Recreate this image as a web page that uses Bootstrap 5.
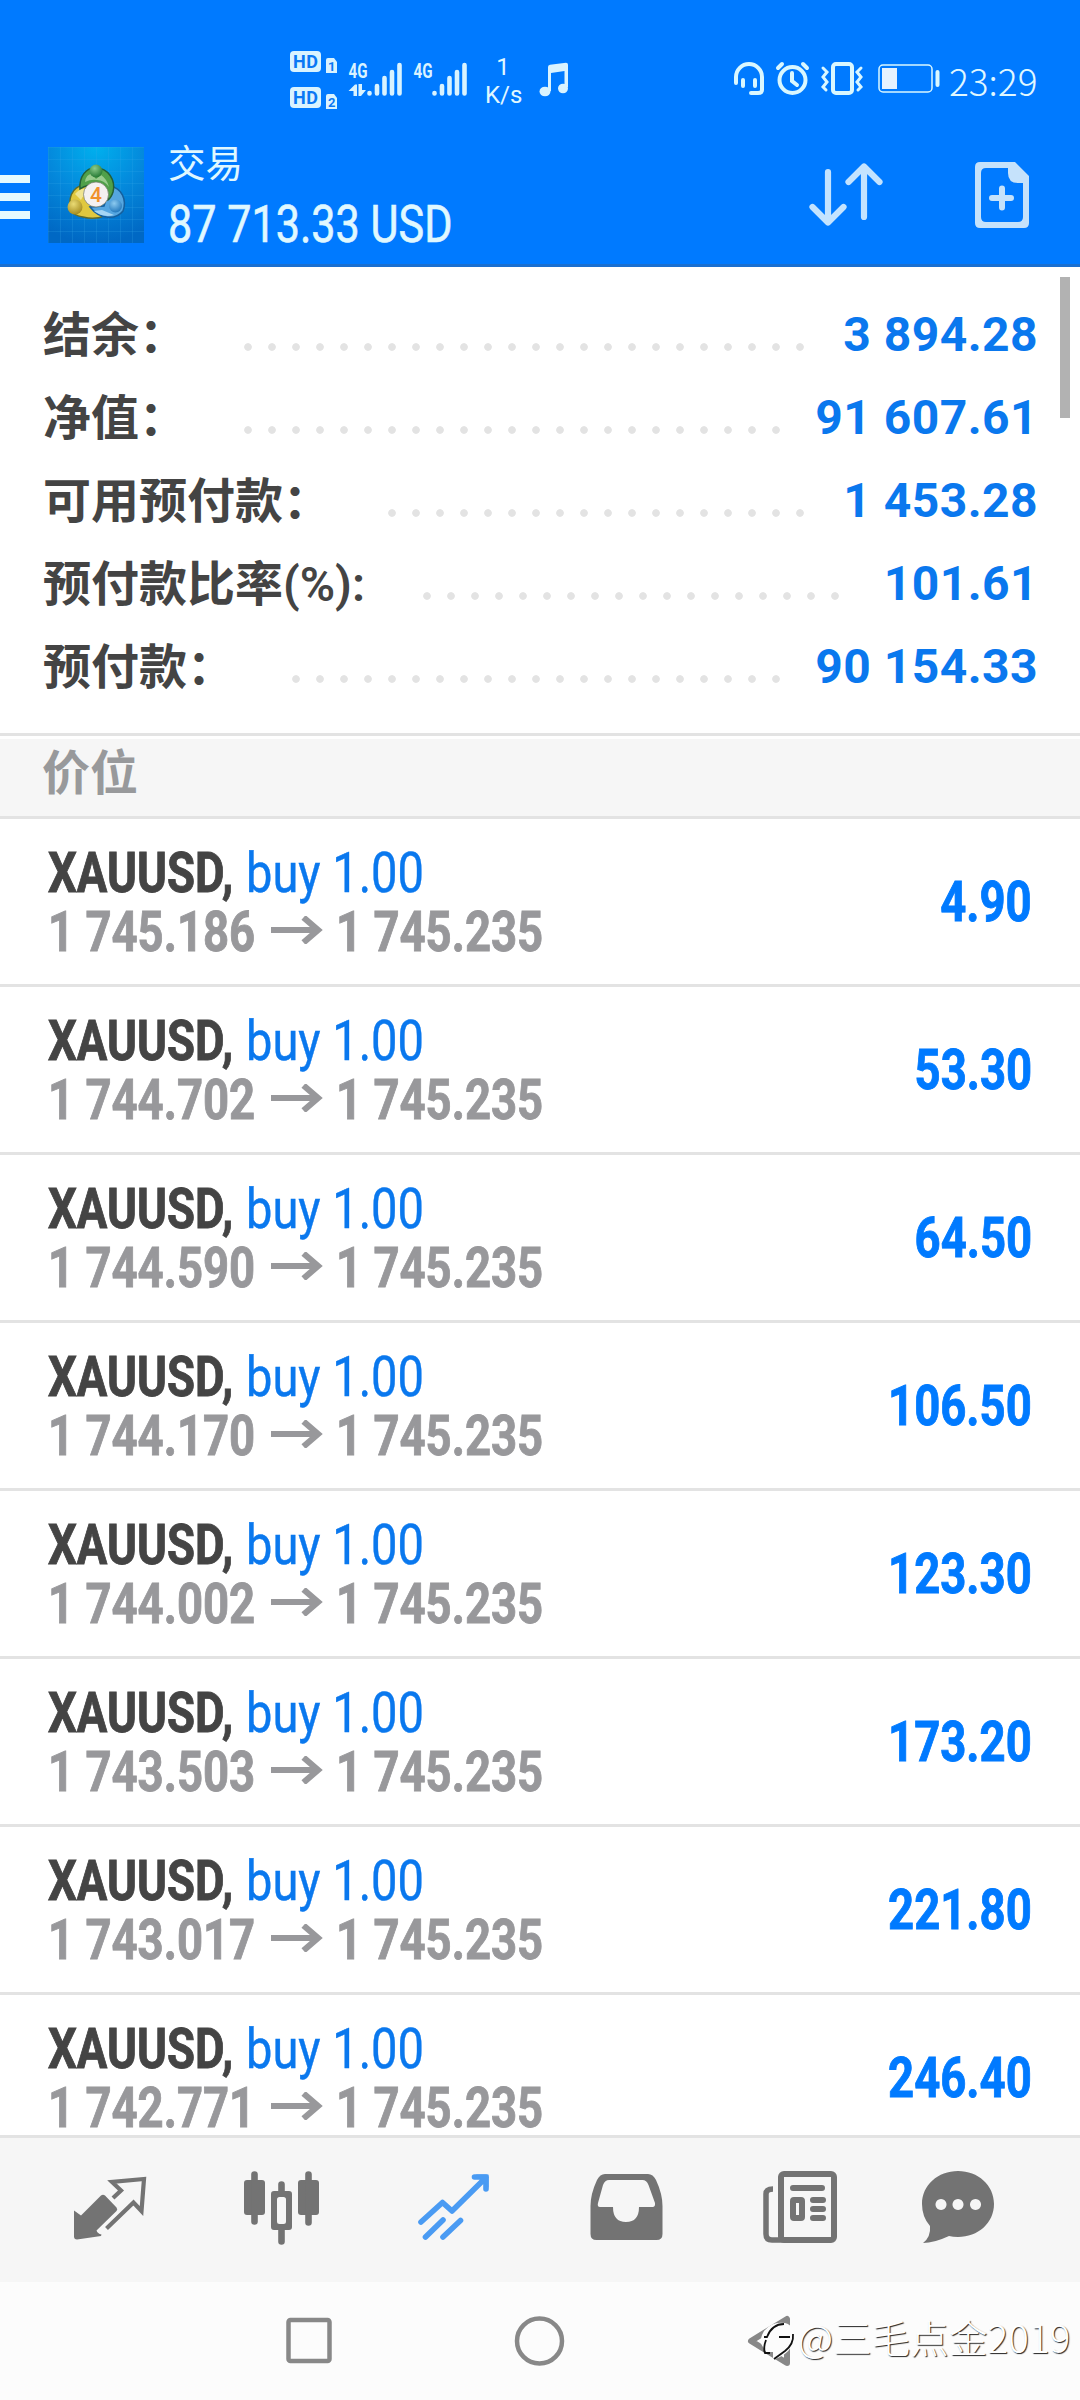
<!DOCTYPE html>
<html lang="zh-CN">
<head>
<meta charset="utf-8">
<meta name="viewport" content="width=device-width, initial-scale=1">
<title>交易</title>
<link href="https://cdn.jsdelivr.net/npm/bootstrap@5.3.0/dist/css/bootstrap.min.css" rel="stylesheet">
<style>
  body{width:1080px;height:2400px;overflow:hidden;background:#fff;font-family:Roboto,"Noto Sans CJK SC",sans-serif;line-height:1;color:#444}
  svg{display:block;flex:none}
  .app{height:2400px}
  .top-area{height:267px;background:#007aff;border-bottom:3px solid #1a6fd0}
  .status{height:130px;padding:46px 43px 0 289px}
  .titlebar{height:134px}
  .ice{color:#e0f8ff}
  .rate{font-size:24px;line-height:28px;width:36px;margin-left:14px;margin-top:7px}
  .clock{font-family:"Noto Sans CJK SC",sans-serif;font-weight:300;font-size:37px;line-height:40px;width:88px;margin-left:9px}
  .account{margin-left:24px;width:637px;padding-top:12px}
  .heading{font-size:37.5px;line-height:44px}
  .sum{font-size:51.5px;line-height:52px;margin-top:13px;-webkit-text-stroke:.5px}
  .squeeze{display:inline-block;white-space:pre;transform-origin:0 50%}
  .sq-r{transform:scaleX(.855);-webkit-text-stroke:.4px}
  .sum .sq-r{transform:scaleX(.838);-webkit-text-stroke:.6px}
  .sq-b{transform:scaleX(.827);-webkit-text-stroke:.9px}
  .summary{height:466px;padding:26px 0 0 43px;position:relative}
  .sum-row{height:83px;font-size:48px;font-weight:700;padding-right:42px}
  .lbl{color:#444;white-space:nowrap;position:relative;top:1px}
  .dotline{height:8px;margin-top:24px;background:radial-gradient(circle at 12px 4px,#e3e3e3 3.4px,transparent 4.2px) 0 0/24px 8px repeat-x}
  .amount{color:#0a78ee;letter-spacing:.45px;margin-left:auto}
  .thumb{position:absolute;left:1060px;top:10px;width:10px;height:141px;background:#b2b2b2}
  .section{height:86px;border-top:3px solid #e3e3e3;border-bottom:3px solid #e3e3e3;padding-top:3px}
  .section>div{height:77px;background:#f6f6f6;padding:10px 0 0 42px;font-size:48px;line-height:50px;font-weight:700;color:#98999b}
  .trades{height:1316px;overflow:hidden;background:#fff}
  .trade{height:168px;border-bottom:3px solid #e3e3e3;padding:29px 0 0 48px}
  .ln{height:59px;font-size:55px;line-height:50px;white-space:nowrap}
  .sym{width:198px;font-weight:700;color:#444}
  .side{color:#0a78ee}
  .price{color:#98989b;font-weight:700}
  .price svg{margin-top:9px}
  .p1{width:223px}.p2{margin-left:13px}
  .profit{font-size:55px;font-weight:700;color:#007aff;margin-right:48px;line-height:60px;padding-top:24px}
  .profit .squeeze{transform-origin:100% 50%}
  .tabs{height:147px;background:#f6f6f6;border-top:3px solid #e3e3e3}
  .sysnav{height:118px;background:#fcfcfc;position:relative}
  .wm{position:absolute;left:798px;top:33px;font-family:"Noto Sans CJK SC",sans-serif;font-weight:300;font-size:38.5px;line-height:42px;letter-spacing:.1px;color:#fff;text-shadow:1px 1px 1px #222;white-space:nowrap}
</style>
<script src="https://cdn.jsdelivr.net/npm/bootstrap@5.3.0/dist/js/bootstrap.bundle.min.js"></script>
</head>
<body>
<div class="app d-flex flex-column">
  <header class="top-area">
    <div class="status d-flex align-items-start ice">
      <svg width="182" height="66" viewBox="289 46 182 66" fill="#d9f3ff" font-family="Roboto" font-weight="700">
        <rect x="290" y="51" width="31" height="21" rx="4"/><rect x="290" y="87" width="31" height="21" rx="4"/>
        <path d="M326 60q0-2 2-2h6l3 4v11h-11zM326 96q0-2 2-2h6l3 4v11h-11z"/>
        <g fill="#0a78f4"><text x="293" y="68" font-size="18" textLength="25">HD</text><text x="293" y="104" font-size="18" textLength="25">HD</text><text x="328" y="71" font-size="13">1</text><text x="328" y="107" font-size="13">2</text></g>
        <text x="348.500" y="78" font-size="21" textLength="19" lengthAdjust="spacingAndGlyphs">4G</text>
        <text x="413.500" y="78" font-size="21" textLength="19" lengthAdjust="spacingAndGlyphs">4G</text>
        <path d="M348.500 91l6.500-6.500h2v11.500h-3.500v-5zM358.500 84h3.500v6h4l-5 6h-2.500z"/>
        <g stroke="#d9f3ff" stroke-width="4.600" stroke-linecap="round"><path d="M369.500 93v.5M377 86v7.500M384.500 78v15.500M392 72v21.500M399.500 65v28.500M434.500 93v.5M442 86v7.500M449.500 78v15.500M457 72v21.500M464.500 65v28.500"/></g>
      </svg>
      <div class="rate text-center">1<br>K/s</div>
      <svg style="margin:16px 0 0 18px" width="30" height="36" viewBox="540 62 30 36" fill="#d9f3ff"><path d="M549 67q0-2 2-2.300l16-2q2 0 2 2V87h-3.500V71L552 73v18h-3z"/><ellipse cx="546" cy="91.500" rx="5.500" ry="4.800"/><ellipse cx="564" cy="88.500" rx="5" ry="4.800"/></svg>
      <svg style="margin:13px 0 0 auto" width="208" height="40" viewBox="732 60 208 40" fill="none" stroke="#d9f7ff" stroke-width="4" stroke-linecap="round">
        <path d="M736 84v-6a13 13 0 0 1 26 0v13q0 3-4 3h-7M743 81v6M755 81v6" stroke-width="4"/>
        <circle cx="792.500" cy="81" r="13"/><path d="M792 74v8l5 4M778 69l4-4M807 69l-4-4"/>
        <rect x="833" y="65" width="19" height="29" rx="3"/><path d="M823 69l4 4-4 5 4 5-4 5 3 3M861 69l-4 4 4 5-4 5 4 5-3 3" stroke-width="3"/>
        <rect x="879" y="66" width="53" height="27" rx="4" stroke-width="1.500"/><rect x="882" y="69" width="15" height="21" fill="#e6f2ff" stroke="none"/><path d="M937.500 73v13" stroke-width="4"/>
      </svg>
      <div class="clock" style="margin-top:14px">23:29</div>
    </div>
    <div class="titlebar d-flex align-items-start ice">
      <svg style="margin-top:44px" width="30" height="46" fill="#e6faff"><path d="M0 1h30v8H0zM0 19h30v8H0zM0 37h30v8H0z"/></svg>
      <svg style="margin:17px 0 0 18px" width="96" height="96" viewBox="0 0 96 96">
        <defs>
          <radialGradient id="bg" cx=".5" cy="0" r="1"><stop offset="0" stop-color="#00b0ee"/><stop offset=".5" stop-color="#0489dc"/><stop offset="1" stop-color="#0068c4"/></radialGradient>
          <pattern id="grid" width="12" height="12" patternUnits="userSpaceOnUse"><path d="M0 .5h12M.5 0v12" stroke="#35a8e6" stroke-opacity=".22"/></pattern>
          <radialGradient id="gr" cx=".4" cy=".3" r=".7"><stop offset="0" stop-color="#8ccb8a"/><stop offset="1" stop-color="#267a35"/></radialGradient>
          <radialGradient id="ye" cx=".4" cy=".3" r=".7"><stop offset="0" stop-color="#eadb75"/><stop offset="1" stop-color="#a68d20"/></radialGradient>
          <radialGradient id="bl" cx=".4" cy=".3" r=".7"><stop offset="0" stop-color="#8ccaf0"/><stop offset="1" stop-color="#2479bd"/></radialGradient>
        </defs>
        <path fill="url(#bg)" d="M0 0h96v96H0z"/><path fill="url(#grid)" d="M0 0h96v96H0z"/>
        <g stroke-width="1.500">
          <path d="M22 62C20 46 28 37 40 38l8 12-4 10q4 6 12 9-9 4-21 1-9-1-13-8z" fill="#e0c83f" stroke="#5f6b2d"/>
          <path d="M62 39c12 2 17 14 13 25-7 9-23 9-33-4l14-1z" fill="#55a6e0" stroke="#155f9d"/>
          <path d="M46 64q9 7 20 4l-12-5z" fill="#a5d6f4" stroke="none"/>
          <path d="M27 47q5-6 12-5l2 5q-6 0-8 6z" fill="#f4eca8" stroke="none" opacity=".8"/>
          <path d="M32 42c-1-12 6-22 16-21 12 0 20 12 17 24q-2 6-5 8-1-10-7-15-12-2-21 4z" fill="#50a04a" stroke="#245f38"/>
          <path d="M37 35q1-8 7-8l4 5 5-4q6 4 8 12-5-7-12-7-6-1-12 2z" fill="#c8e8bb" stroke="none" opacity=".6"/>
        </g>
        <circle cx="48" cy="24" r="6.500" fill="url(#gr)"/><circle cx="27" cy="60" r="7.500" fill="url(#ye)"/><circle cx="67.500" cy="59" r="6.500" fill="url(#bl)"/>
        <circle cx="48" cy="47.500" r="12.500" fill="#f4f1f1" stroke="#72796a" stroke-width=".7"/>
        <text x="48" y="55" text-anchor="middle" font-family="Roboto" font-weight="500" font-size="21" fill="#f0912d">4</text>
      </svg>
      <div class="account">
        <div class="heading">交易</div>
        <div class="sum"><span class="squeeze sq-r">87 713.33 USD</span></div>
      </div>
      <svg style="margin:31px 0 0 3px" width="78" height="68" viewBox="808 161 78 68" fill="none" stroke="#c3e3ff" stroke-width="6.200" stroke-linecap="round" stroke-linejoin="round"><path d="M828 172v50M812.500 207l15.500 15.500 15.500-15.500M864 217v-50M848.500 182l15.500-15.500 15.500 15.500"/></svg>
      <svg style="margin:31px 0 0 88px" width="56" height="68" viewBox="974 161 56 68"><path fill-rule="evenodd" fill="#c5e2fb" d="M980 162h35l14 14v47q0 5-5 5h-44q-5 0-5-5v-56q0-5 5-5zm6 6q-5 0-5 5v44q0 5 5 5h32q5 0 5-5v-34h-5q-10 0-10-10v-5z"/><path d="M992 198h19M1002 188.500v19" stroke="#c5e2fb" stroke-width="6" stroke-linecap="round"/></svg>
    </div>
  </header>

  <section class="summary">
    <div class="sum-row d-flex align-items-center"><span class="lbl" style="width:193px">结余：</span><span class="dotline" style="width:576px"></span><span class="amount">3 894.28</span></div>
    <div class="sum-row d-flex align-items-center"><span class="lbl" style="width:193px">净值：</span><span class="dotline" style="width:552px"></span><span class="amount">91 607.61</span></div>
    <div class="sum-row d-flex align-items-center"><span class="lbl" style="width:337px">可用预付款：</span><span class="dotline" style="width:432px"></span><span class="amount">1 453.28</span></div>
    <div class="sum-row d-flex align-items-center"><span class="lbl" style="width:372px">预付款比率<span style="font-weight:600">(%):</span></span><span class="dotline" style="width:432px"></span><span class="amount">101.61</span></div>
    <div class="sum-row d-flex align-items-center"><span class="lbl" style="width:241px">预付款：</span><span class="dotline" style="width:504px"></span><span class="amount">90 154.33</span></div>
    <div class="thumb"></div>
  </section>

  <section class="section"><div>价位</div></section>

  <main class="trades">
    <svg class="d-none"><symbol id="arrow" viewBox="0 0 52 28"><path d="M0 14h47M32.500 1.500L47 14 32.500 26.500" fill="none" stroke="#98989b" stroke-width="6.200"/></symbol></svg>
    <div class="trade d-flex justify-content-between"><div><div class="ln d-flex"><span class="sym"><span class="squeeze sq-b">XAUUSD,</span></span><span class="squeeze sq-r side">buy 1.00</span></div><div class="ln price d-flex"><span class="p1"><span class="squeeze sq-b">1 745.186</span></span><svg width="52" height="28"><use href="#arrow"/></svg><span class="squeeze sq-b p2">1 745.235</span></div></div><div class="profit"><span class="squeeze sq-b">4.90</span></div></div>
    <div class="trade d-flex justify-content-between"><div><div class="ln d-flex"><span class="sym"><span class="squeeze sq-b">XAUUSD,</span></span><span class="squeeze sq-r side">buy 1.00</span></div><div class="ln price d-flex"><span class="p1"><span class="squeeze sq-b">1 744.702</span></span><svg width="52" height="28"><use href="#arrow"/></svg><span class="squeeze sq-b p2">1 745.235</span></div></div><div class="profit"><span class="squeeze sq-b">53.30</span></div></div>
    <div class="trade d-flex justify-content-between"><div><div class="ln d-flex"><span class="sym"><span class="squeeze sq-b">XAUUSD,</span></span><span class="squeeze sq-r side">buy 1.00</span></div><div class="ln price d-flex"><span class="p1"><span class="squeeze sq-b">1 744.590</span></span><svg width="52" height="28"><use href="#arrow"/></svg><span class="squeeze sq-b p2">1 745.235</span></div></div><div class="profit"><span class="squeeze sq-b">64.50</span></div></div>
    <div class="trade d-flex justify-content-between"><div><div class="ln d-flex"><span class="sym"><span class="squeeze sq-b">XAUUSD,</span></span><span class="squeeze sq-r side">buy 1.00</span></div><div class="ln price d-flex"><span class="p1"><span class="squeeze sq-b">1 744.170</span></span><svg width="52" height="28"><use href="#arrow"/></svg><span class="squeeze sq-b p2">1 745.235</span></div></div><div class="profit"><span class="squeeze sq-b">106.50</span></div></div>
    <div class="trade d-flex justify-content-between"><div><div class="ln d-flex"><span class="sym"><span class="squeeze sq-b">XAUUSD,</span></span><span class="squeeze sq-r side">buy 1.00</span></div><div class="ln price d-flex"><span class="p1"><span class="squeeze sq-b">1 744.002</span></span><svg width="52" height="28"><use href="#arrow"/></svg><span class="squeeze sq-b p2">1 745.235</span></div></div><div class="profit"><span class="squeeze sq-b">123.30</span></div></div>
    <div class="trade d-flex justify-content-between"><div><div class="ln d-flex"><span class="sym"><span class="squeeze sq-b">XAUUSD,</span></span><span class="squeeze sq-r side">buy 1.00</span></div><div class="ln price d-flex"><span class="p1"><span class="squeeze sq-b">1 743.503</span></span><svg width="52" height="28"><use href="#arrow"/></svg><span class="squeeze sq-b p2">1 745.235</span></div></div><div class="profit"><span class="squeeze sq-b">173.20</span></div></div>
    <div class="trade d-flex justify-content-between"><div><div class="ln d-flex"><span class="sym"><span class="squeeze sq-b">XAUUSD,</span></span><span class="squeeze sq-r side">buy 1.00</span></div><div class="ln price d-flex"><span class="p1"><span class="squeeze sq-b">1 743.017</span></span><svg width="52" height="28"><use href="#arrow"/></svg><span class="squeeze sq-b p2">1 745.235</span></div></div><div class="profit"><span class="squeeze sq-b">221.80</span></div></div>
    <div class="trade d-flex justify-content-between border-0"><div><div class="ln d-flex"><span class="sym"><span class="squeeze sq-b">XAUUSD,</span></span><span class="squeeze sq-r side">buy 1.00</span></div><div class="ln price d-flex"><span class="p1"><span class="squeeze sq-b">1 742.771</span></span><svg width="52" height="28"><use href="#arrow"/></svg><span class="squeeze sq-b p2">1 745.235</span></div></div><div class="profit"><span class="squeeze sq-b">246.40</span></div></div>
  </main>

  <nav class="tabs">
    <svg width="1080" height="144" viewBox="0 2138 1080 144" fill="#737373">
      <path d="M74 2210.500l7 5 20-20q2-1.500 4 0l11.500 12q1.500 2 0 3.500l-20 19.500q1 3 5 4l-.5 1.500-24 3.500q-3 0-3-3z"/>
      <path d="M113 2198l8-7.500-9-8.500 32-3-2.500 32-8-8.500-27 26" fill="none" stroke="#737373" stroke-width="4.200"/>
      <rect x="244" y="2180" width="21" height="35" rx="3"/><rect x="298" y="2180" width="21" height="35" rx="3"/>
      <path d="M254.500 2174.500v47M308.500 2174.500v48M281.500 2184.500v8M281.500 2229v12.500" stroke="#737373" stroke-width="6.600" stroke-linecap="round"/>
      <path fill-rule="evenodd" d="M274 2191h15q3 0 3 3v33q0 3-3 3h-15q-3 0-3-3v-33q0-3 3-3zm5.500 6q-2.500 0-2.500 2.500v22q0 2.500 2.500 2.500h4q2.500 0 2.500-2.500v-22q0-2.500-2.500-2.500z"/>
      <path d="M421 2222l21.500-19.500 9.500 8.500 34-33.500M474.500 2177h11.500v12M425.500 2237l17.500-17M443 2237l17.500-16.500" fill="none" stroke="#4a9bf3" stroke-width="5.600" stroke-linecap="round" stroke-linejoin="round"/><path d="M476 2174.500h12.500v13z" fill="#4a9bf3"/>
      <path fill-rule="evenodd" d="M605 2174h43q5 0 8 6 6.500 14 6.500 26v28q0 6-6 6h-60q-6 0-6-6v-28q0-12 6.500-26 3-6 8-6zm4 6q-4 0-6 5l-5 18q-1 4 2 4h13q0 15 13 15t13-15h13.500q3 0 2.500-4l-6.500-18q-2-5-6-5z"/>
      <g fill="none" stroke="#737373" stroke-width="6"><rect x="781" y="2174" width="53" height="66" rx="3"/><path d="M773 2189q-7 0-7 5v40q0 6 6 6h12" stroke-width="5.500"/><path d="M793 2188h29M813 2200h10M813 2209h10M813 2218h10" stroke-linecap="round"/><rect x="793" y="2200" width="9" height="18" rx="1"/></g>
      <path fill-rule="evenodd" d="M958 2171c20 0 36 14 36 33s-16 33-36 33q-5 0-9-1-15 7-26 7 8-6 7-17-8-9-8-22c0-19 16-33 36-33zm-17 28a5.500 5.500 0 1 0 .01 0zm17 0a5.500 5.500 0 1 0 .01 0zm17.500 0a5.500 5.500 0 1 0 .01 0z"/>
    </svg>
  </nav>
  <footer class="sysnav">
    <svg width="1080" height="118" viewBox="0 2282 1080 118" fill="none" stroke="#888" stroke-width="4.500"><rect x="288.500" y="2320" width="41" height="41" rx="2"/><circle cx="539.500" cy="2341" r="22.500"/><path d="M787 2319v44l-36-22z" stroke-width="6" stroke-linejoin="round"/>
      <path d="M764 2331q8-10 21-8c11 3 13 16 6 24q-4 8-18 13v-8h-7l-6-10 2-7z" fill="#fcfcfc" stroke="none"/>
      <path d="M764 2337h3q5-13 17-13M766 2340q-3 8-1 13h5M793 2334q1 10-8 17l-11 8M779 2337h11" stroke="#111" stroke-width="1.800"/>
    </svg>
    <div class="wm">@三毛点金2019</div>
  </footer>
</div>
</body>
</html>
